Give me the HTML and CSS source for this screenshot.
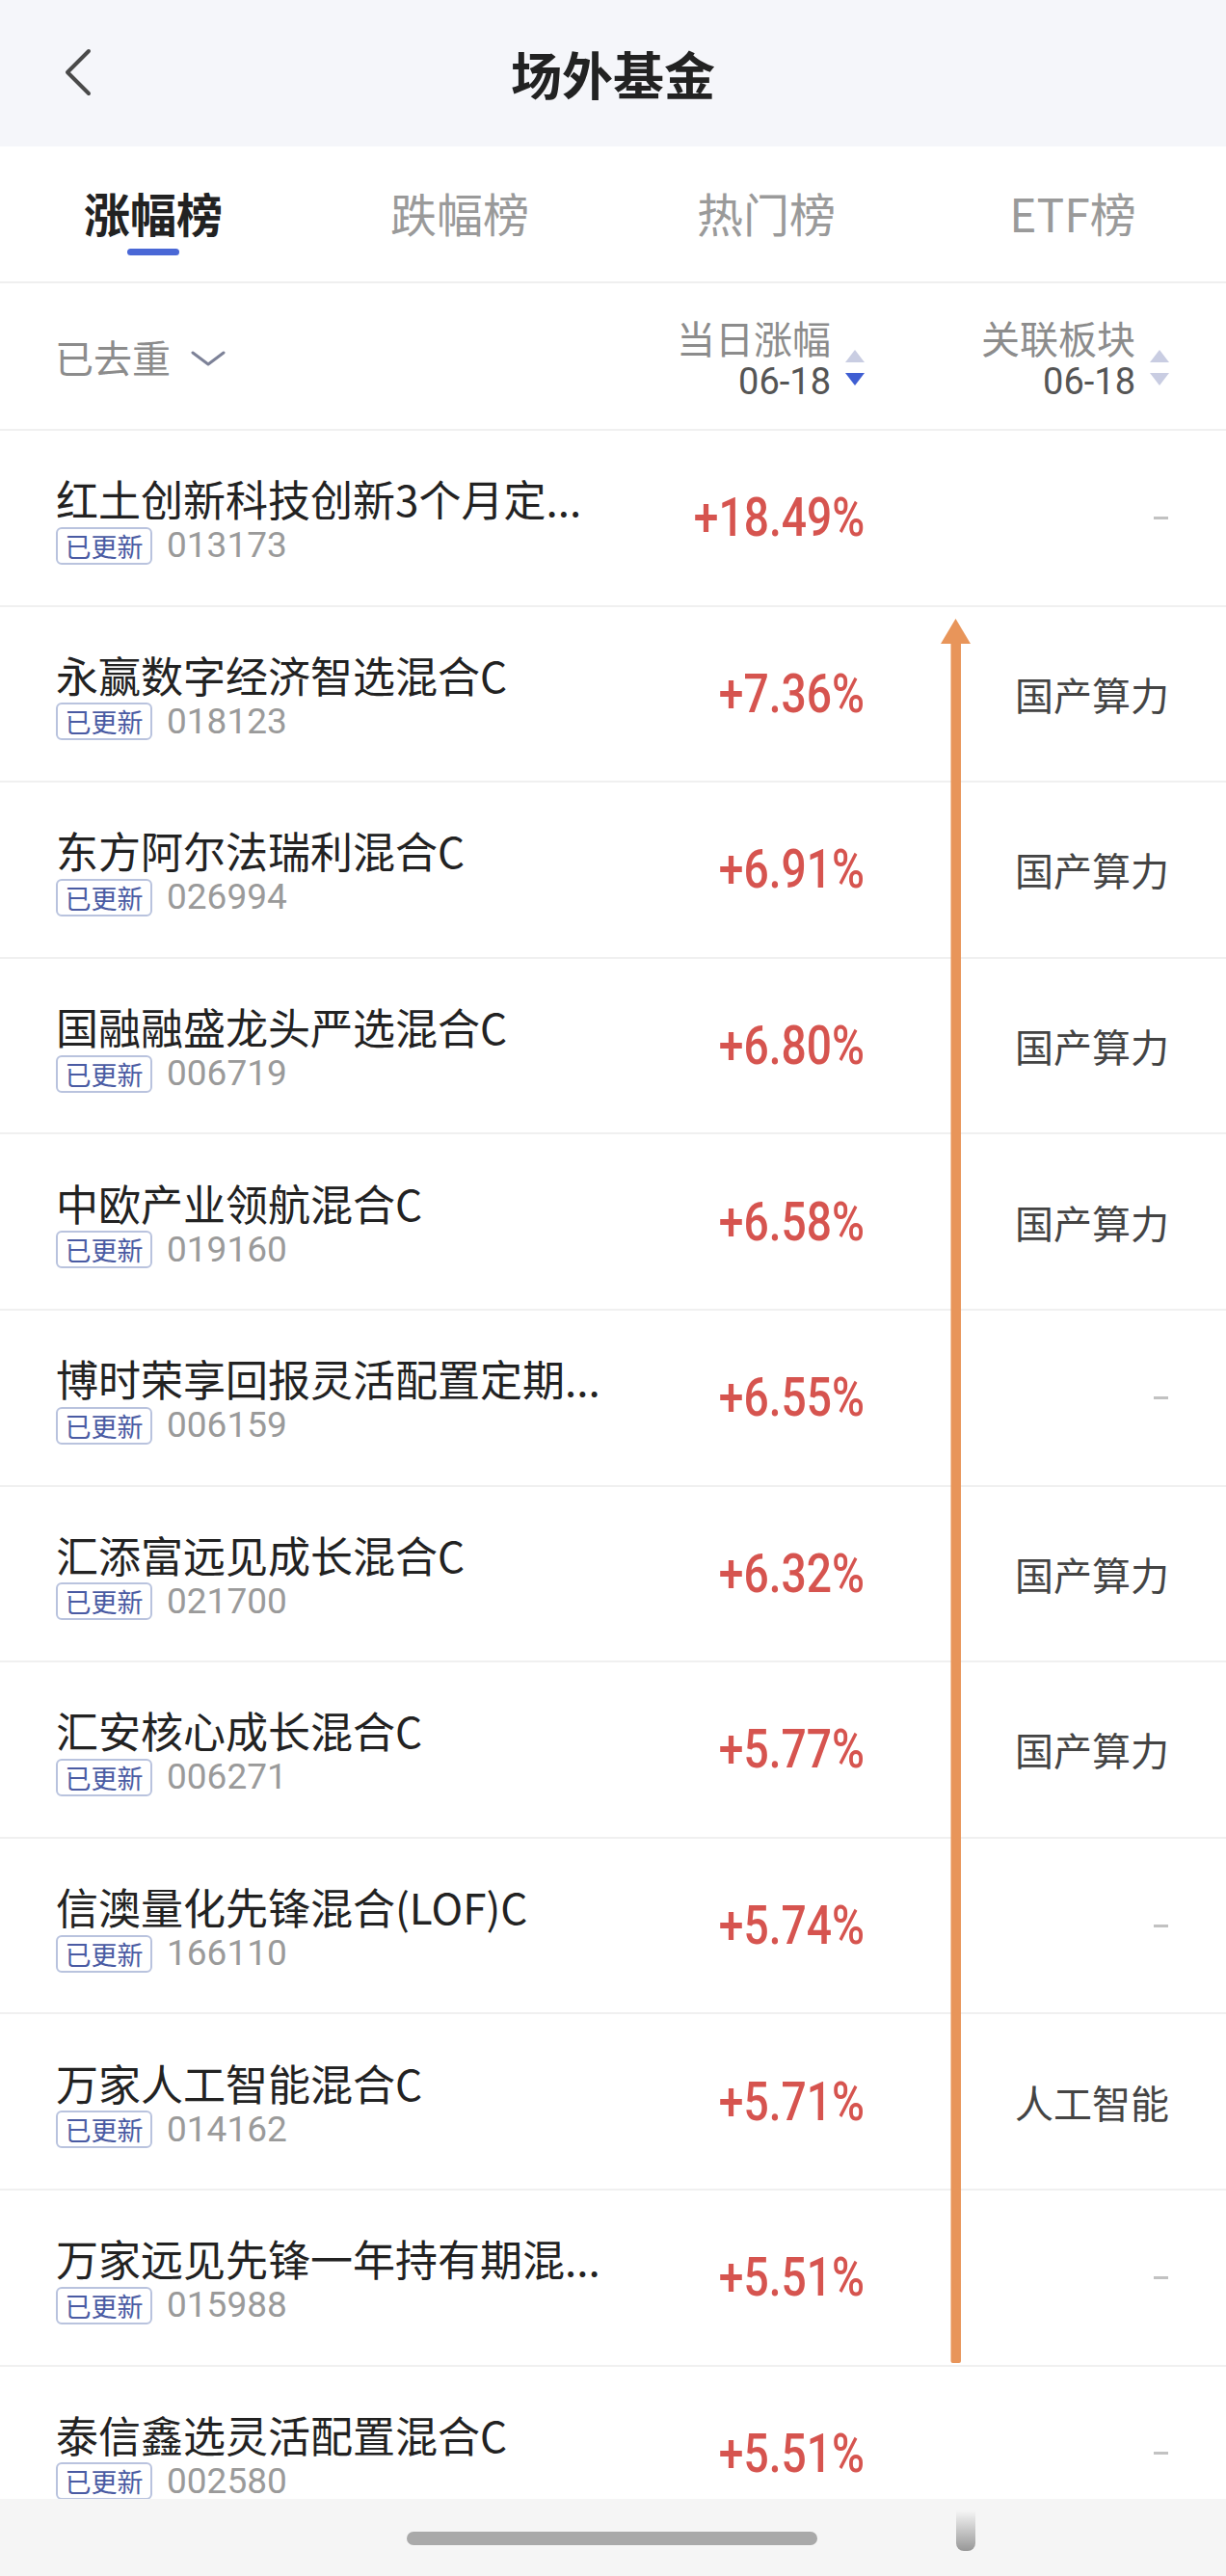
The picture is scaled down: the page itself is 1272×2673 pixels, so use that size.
FILE: index.html
```html
<!DOCTYPE html>
<html lang="zh-CN">
<head>
<meta charset="utf-8">
<title>场外基金</title>
<link rel="stylesheet" href="styles.css">
</head>
<body>
<div class="screen">
  <header class="nav">
    <svg class="back" width="30" height="52" viewBox="0 0 30 52"><polyline points="26,3 4,25 26,47" fill="none" stroke="#4a4a4a" stroke-width="4" stroke-linecap="round" stroke-linejoin="round"/></svg>
    <h1 class="title">场外基金</h1>
  </header>

  <nav class="tabs">
    <div class="tab active"><span>涨幅榜</span><i class="bar"></i></div>
    <div class="tab"><span>跌幅榜</span></div>
    <div class="tab"><span>热门榜</span></div>
    <div class="tab"><span>ETF榜</span></div>
  </nav>

  <div class="colhead">
    <div class="filter">已去重<svg width="36" height="16" viewBox="0 0 36 16"><polyline points="2,2 18,14 34,2" fill="none" stroke="#7d8298" stroke-width="3" stroke-linecap="round" stroke-linejoin="round"/></svg></div>
    <div class="sorthead">
      <div class="htxt"><span class="hlabel">当日涨幅</span><span class="hdate">06-18</span></div>
      <div class="sort"><i class="up"></i><i class="down on"></i></div>
    </div>
    <div class="sorthead">
      <div class="htxt"><span class="hlabel">关联板块</span><span class="hdate">06-18</span></div>
      <div class="sort"><i class="up"></i><i class="down"></i></div>
    </div>
  </div>

  <div class="list">
    <div class="row"><div class="info"><div class="name">红土创新科技创新3个月定...</div><div class="meta"><span class="tag">已更新</span><span class="code">013173</span></div></div><div class="pct"><span>+18.49%</span></div><div class="sector"><span class="dash"></span></div></div>
    <div class="row"><div class="info"><div class="name">永赢数字经济智选混合C</div><div class="meta"><span class="tag">已更新</span><span class="code">018123</span></div></div><div class="pct"><span>+7.36%</span></div><div class="sector">国产算力</div></div>
    <div class="row"><div class="info"><div class="name">东方阿尔法瑞利混合C</div><div class="meta"><span class="tag">已更新</span><span class="code">026994</span></div></div><div class="pct"><span>+6.91%</span></div><div class="sector">国产算力</div></div>
    <div class="row"><div class="info"><div class="name">国融融盛龙头严选混合C</div><div class="meta"><span class="tag">已更新</span><span class="code">006719</span></div></div><div class="pct"><span>+6.80%</span></div><div class="sector">国产算力</div></div>
    <div class="row"><div class="info"><div class="name">中欧产业领航混合C</div><div class="meta"><span class="tag">已更新</span><span class="code">019160</span></div></div><div class="pct"><span>+6.58%</span></div><div class="sector">国产算力</div></div>
    <div class="row"><div class="info"><div class="name">博时荣享回报灵活配置定期...</div><div class="meta"><span class="tag">已更新</span><span class="code">006159</span></div></div><div class="pct"><span>+6.55%</span></div><div class="sector"><span class="dash"></span></div></div>
    <div class="row"><div class="info"><div class="name">汇添富远见成长混合C</div><div class="meta"><span class="tag">已更新</span><span class="code">021700</span></div></div><div class="pct"><span>+6.32%</span></div><div class="sector">国产算力</div></div>
    <div class="row"><div class="info"><div class="name">汇安核心成长混合C</div><div class="meta"><span class="tag">已更新</span><span class="code">006271</span></div></div><div class="pct"><span>+5.77%</span></div><div class="sector">国产算力</div></div>
    <div class="row"><div class="info"><div class="name">信澳量化先锋混合(LOF)C</div><div class="meta"><span class="tag">已更新</span><span class="code">166110</span></div></div><div class="pct"><span>+5.74%</span></div><div class="sector"><span class="dash"></span></div></div>
    <div class="row"><div class="info"><div class="name">万家人工智能混合C</div><div class="meta"><span class="tag">已更新</span><span class="code">014162</span></div></div><div class="pct"><span>+5.71%</span></div><div class="sector">人工智能</div></div>
    <div class="row"><div class="info"><div class="name">万家远见先锋一年持有期混...</div><div class="meta"><span class="tag">已更新</span><span class="code">015988</span></div></div><div class="pct"><span>+5.51%</span></div><div class="sector"><span class="dash"></span></div></div>
    <div class="row"><div class="info"><div class="name">泰信鑫选灵活配置混合C</div><div class="meta"><span class="tag">已更新</span><span class="code">002580</span></div></div><div class="pct"><span>+5.51%</span></div><div class="sector"><span class="dash"></span></div></div>
  </div>

  <svg class="arrow" width="36" height="1815" viewBox="0 0 36 1815"><polygon points="17.5,2 33,28 2,28" fill="#e8955a"/><rect x="12.5" y="26" width="10.5" height="1786" rx="2" fill="#e8955a"/></svg>

  <div class="homebar">
    <i class="pill"></i>
    <i class="ghost"></i>
  </div>
</div>
</body>
</html>
```

FILE: styles.css
```css
* { box-sizing: border-box; margin: 0; padding: 0; }
html, body { background: #ffffff; }
body {
  margin: 0;
  font-family: "Noto Sans CJK SC", "Noto Sans", Roboto, sans-serif;
  color: #222;
}
.screen {
  position: relative;
  width: 1272px;
  height: 2673px;
  overflow: hidden;
  background: #fff;
}

/* nav */
.nav {
  height: 152px;
  background: #f5f6fa;
  display: flex;
  align-items: center;
  justify-content: center;
  position: relative;
}
.back {
  position: absolute;
  left: 66px;
  top: 50px;
}
.title {
  font-size: 53px;
  font-weight: 700;
  color: #222;
  line-height: 1;
  letter-spacing: 0;
}

/* tabs */
.tabs {
  display: grid;
  grid-template-columns: repeat(4, 1fr);
  height: 142px;
  border-bottom: 2px solid #efefef;
}
.tab {
  display: flex;
  flex-direction: column;
  align-items: center;
  padding-top: 40px;
}
.tab span {
  font-size: 48px;
  line-height: 56px;
  color: #9a9a9a;
}
.tab.active span {
  color: #222;
  font-weight: 700;
}
.tab .bar {
  display: block;
  width: 54px;
  height: 7px;
  border-radius: 4px;
  background: #4a68d6;
  margin-top: 10px;
}

/* column head */
.colhead {
  display: grid;
  grid-template-columns: 1fr 260px 316px;
  align-items: center;
  height: 153px;
  padding: 0 59px 0 57px;
  border-bottom: 2px solid #f0f0f0;
}
.filter {
  display: flex;
  align-items: center;
  gap: 21px;
  font-size: 40px;
  color: #8c8c8c;
  line-height: 48px;
}
.filter svg { margin-top: 4px; }
.sorthead {
  display: flex;
  justify-content: flex-end;
  align-items: center;
  gap: 15px;
  margin-top: 6px;
}
.htxt {
  display: flex;
  flex-direction: column;
  align-items: flex-end;
}
.hlabel {
  font-size: 40px;
  line-height: 46px;
  color: #8c8c8c;
}
.hdate {
  font-family: Roboto, "Noto Sans", sans-serif;
  font-size: 38px;
  line-height: 46px;
  color: #555;
}
.sort {
  display: flex;
  flex-direction: column;
  gap: 11px;
  margin-top: 18px;
}
.sort i {
  display: block;
  width: 0;
  height: 0;
  border-left: 10px solid transparent;
  border-right: 10px solid transparent;
}
.sort .up { border-bottom: 13px solid #c9cde2; }
.sort .down { border-top: 13px solid #c9cde2; }
.sort .down.on { border-top-color: #3f5ed2; }

/* rows */
.row {
  display: grid;
  grid-template-columns: 1fr 260px 316px;
  align-items: center;
  height: 182.6px;
  padding: 0 59px 0 58px;
  border-bottom: 2px solid #f0f0f0;
}
.info {
  display: flex;
  flex-direction: column;
  margin-top: 4px;
}
.name {
  font-size: 44px;
  line-height: 50px;
  color: #222;
  white-space: nowrap;
}
.meta {
  display: flex;
  align-items: center;
  gap: 15px;
  margin-top: 4px;
  height: 40px;
}
.tag {
  display: inline-flex;
  align-items: center;
  justify-content: center;
  width: 100px;
  height: 39px;
  border: 2px solid #b9c3de;
  border-radius: 6px;
  font-size: 27px;
  line-height: 1;
  color: #4a5ba3;
}
.code {
  font-family: Roboto, "Noto Sans", sans-serif;
  font-size: 37px;
  color: #9a9a9a;
  line-height: 40px;
}
.pct {
  text-align: right;
  font-family: Roboto, "Noto Sans", sans-serif;
  font-weight: 500;
  font-size: 55px;
  color: #d6544f;
  line-height: 60px;
}
.pct span {
  display: inline-block;
  transform: scaleX(0.84);
  transform-origin: right center;
}
.sector {
  display: flex;
  justify-content: flex-end;
  align-items: center;
  font-size: 40px;
  color: #444;
  line-height: 48px;
}
.dash {
  display: block;
  width: 15px;
  height: 3px;
  background: #c2c2c2;
  margin-right: 1px;
}

/* overlay arrow annotation */
.arrow {
  position: absolute;
  left: 974px;
  top: 640px;
}

/* home bar */
.homebar {
  position: absolute;
  left: 0;
  right: 0;
  bottom: 0;
  height: 80px;
  background: #f5f5f5;
}
.pill {
  position: absolute;
  left: 422px;
  top: 34px;
  width: 426px;
  height: 14px;
  border-radius: 7px;
  background: #a9a9a9;
}
.ghost {
  position: absolute;
  left: 992px;
  top: 12px;
  width: 20px;
  height: 42px;
  border-radius: 0 0 8px 8px;
  background: linear-gradient(to bottom, rgba(0,0,0,0), rgba(0,0,0,0.55));
  opacity: 0.7;
}
```
